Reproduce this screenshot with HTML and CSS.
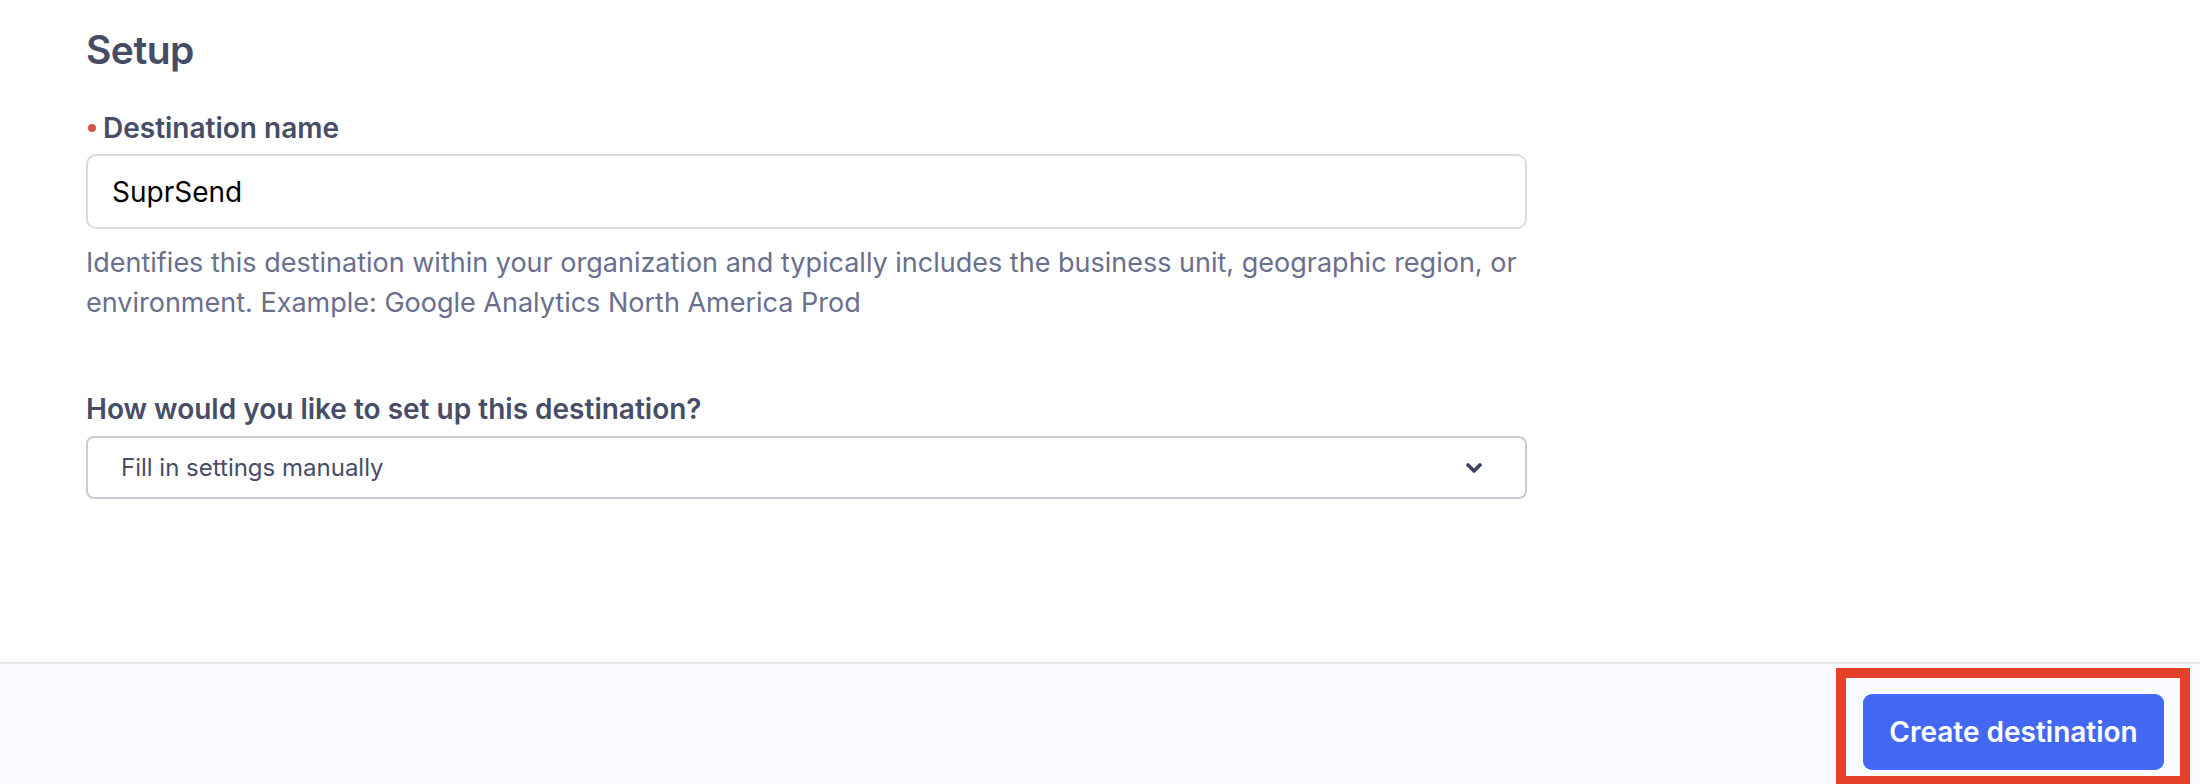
FILE: index.html
```html
<!DOCTYPE html>
<html>
<head>
<meta charset="utf-8">
<link rel="stylesheet" href="styles.css">
</head>
<body>
<div class="page">
  <main class="main">
    <h2 class="title">Setup</h2>
    <div class="field">
      <label class="label"><span class="req"></span>Destination name</label>
      <div class="input">SuprSend</div>
      <p class="help">Identifies this destination within your organization and typically includes the business unit, geographic region, or environment. Example: Google Analytics North America Prod</p>
    </div>
    <div class="field field-select">
      <label class="label">How would you like to set up this destination?</label>
      <div class="select">
        <span>Fill in settings manually</span>
        <svg class="chev" width="16" height="10" viewBox="0 0 16 10"><path d="M2 2 L8 8 L14 2" fill="none" stroke="#3d4260" stroke-width="3.6" stroke-linecap="round" stroke-linejoin="round"/></svg>
      </div>
    </div>
  </main>
  <footer class="footer">
    <div class="highlight">
      <button class="btn">Create destination</button>
    </div>
  </footer>
</div>
</body>
</html>
```

FILE: styles.css
```css
* { box-sizing: border-box; }
html, body { margin: 0; padding: 0; background: #ffffff; }
body { font-family: Inter, "Noto Sans", sans-serif; width: 2200px; height: 784px; overflow: hidden; }
.page { display: flex; flex-direction: column; height: 784px; }
.main { flex: none; height: 662px; padding: 26px 0 0 86px; width: 1527px; }
.title { margin: 0; font-size: 39px; line-height: 48px; font-weight: 600; color: #474c66; letter-spacing: -0.5px; }
.field { margin-top: 36px; }
.label { display: flex; align-items: center; font-size: 28px; line-height: 36px; font-weight: 600; color: #474d66; }
.req { width: 8px; height: 8px; border-radius: 50%; background: #d9544f; margin: 0 7px 0 2px; }
.input { margin-top: 8px; height: 75px; border: 2px solid #d8dae5; border-radius: 10px; padding: 0 24px; display: flex; align-items: center; font-size: 28px; color: #000; }
.help { margin: 14px 0 0; font-size: 27px; line-height: 40px; color: #696f8c; padding-right: 4px; }
.field-select { margin-top: 68px; }
.select { margin-top: 9px; height: 63px; border: 2px solid #c8cad8; border-radius: 8px; padding: 0 43px 0 33px; display: flex; align-items: center; justify-content: space-between; font-size: 24px; color: #474d66; }
.footer { flex: 1; background: #f9fafd; border-top: 2px solid #e4e6eb; display: flex; justify-content: flex-end; align-items: flex-start; padding: 4px 10px 0 0; }
.highlight { flex: none; border: 10px solid #e5402a; padding: 16px 16px 0 17px; height: 118px; }
.btn { font-family: Inter, "Noto Sans", sans-serif; width: 301px; height: 76px; background: #4468f6; color: #fff; border: none; border-radius: 9px; font-size: 28px; font-weight: 600; padding: 0; }
```
